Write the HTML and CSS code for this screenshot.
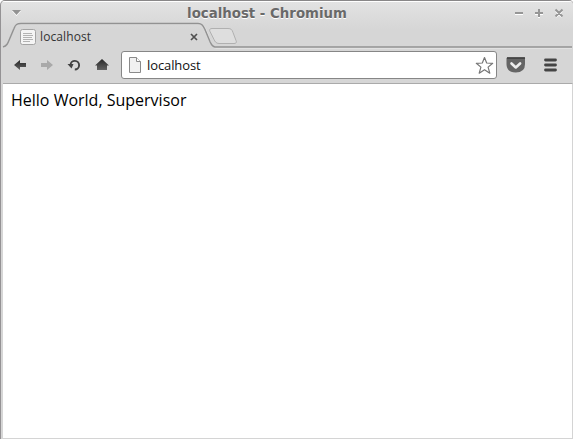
FILE: index.html
```
<!DOCTYPE html>
<html lang="en">
<head>
<meta charset="utf-8">
<title>localhost</title>
<link rel="stylesheet" href="styles.css">
</head>
<body>
<div class="window">
  <header class="titlebar">
    <svg class="menu-arrow" width="10" height="6" viewBox="0 0 10 6"><path d="M0 1h9L4.500 6z" fill="#fff"/><path d="M0 0h9L4.500 5z" fill="#929292"/></svg>
    <h1 class="title">localhost - Chromium</h1>
    <svg class="controls" width="54" height="12" viewBox="0 0 54 12" fill="none" stroke-width="2">
      <path d="M3 7h8M23 7h8M27 3v8M44 4l6 6M50 4l-6 6" stroke="#fff"/>
      <path d="M3 6h8M23 6h8M27 2v8M43.500 2.500l7 7M50.500 2.500l-7 7" stroke="#969696"/>
    </svg>
  </header>
  <div class="tabstrip">
    <svg class="tab-shape" width="573" height="28" viewBox="0 0 573 28" fill="none">
      <path d="M2 26.500c4-1 5-4 7-9l4-10c1.500-4 3-4.500 7-4.500h178c4 0 5 2 7 6l5 13c1 3 2 5 5 5h356" stroke="#ececec"/>
      <path d="M2 26c4-1 5-4 7-9l4-9.500c1.500-4 3-5 7-5h177c4 0 5 2 7 6l5 12c1.500 3 2 5.500 5 5.500h357" stroke="#929292" stroke-width="1.500"/>
      <path d="M211 7.500h16c3 0 4 1 5 4l3 8c1 2 0 3-2 3h-15c-3 0-4-2-5-4l-4-8c-1-2 0-3 2-3z" fill="#dedede" stroke="#b0b0b0"/>
    </svg>
    <div class="tab">
      <svg class="favicon" width="16" height="16" viewBox="0 0 16 16"><rect x=".5" y=".5" width="15" height="15" rx="2" fill="#f5f5f5" stroke="#a4a4a4"/><path d="M3 4.500h9M3 6.500h10M3 8.500h9M3 10.500h10M3 12.500h7" stroke="#b3b3b3"/></svg>
      <span class="tab-title">localhost</span>
      <svg class="tab-close" width="8" height="8" viewBox="0 0 8 8"><path d="M1 1l6 6M7 1L1 7" stroke="#505050" stroke-width="1.700"/></svg>
    </div>
  </div>
  <nav class="toolbar">
    <svg class="nav" width="110" height="18" viewBox="0 0 110 18">
      <defs><linearGradient id="dark" x1="0" y1="0" x2="0" y2="1"><stop offset="0" stop-color="#272727"/><stop offset="1" stop-color="#626262"/></linearGradient></defs>
      <path d="M11 9l6-5v3h6v4h-6v3z" fill="url(#dark)"/>
      <path d="M50 9l-6-5v3h-6v4h6v3z" fill="#a9a9a9"/>
      <path d="M67.500 9a4.300 4.300 0 1 1 4.300 4.500" fill="none" stroke="#414141" stroke-width="1.900"/>
      <path d="M64.500 8h6l-2 4.500z" fill="#414141"/>
      <path d="M92 9.500L99 3l7 6.500h-2V14H94V9.500z" fill="url(#dark)"/>
    </svg>
    <div class="omnibox">
      <svg width="12" height="16" viewBox="0 0 12 16"><path d="M.5.500h7l4 4v11H.5z" fill="#f1f1f1" stroke="#8a8a8a"/><path d="M7.500.500v4h4" fill="#fff" stroke="#8a8a8a"/></svg>
      <span class="url">localhost</span>
      <svg width="19" height="19" viewBox="0 0 19 19"><path d="M9.500 1.500l2.200 5.500 6 .3-4.600 3.800 1.700 6.100-5.300-3.500-5.300 3.500 1.700-6.100L1.300 7.300l6-.3z" fill="#fff" stroke="#777" stroke-width="1.200" stroke-linejoin="round"/></svg>
    </div>
    <svg class="pocket" width="20" height="18" viewBox="0 0 20 18"><path d="M.5 2.500q0-1 1-1h16.500q1 0 1 1v5.500q0 8.500-9.250 8.500T.5 8z" fill="#656565"/><path d="M1 2h18" stroke="#3c3c3c" stroke-width="1.500"/><path d="M5.500 7.500l4.300 4 4.300-4" fill="none" stroke="#ededed" stroke-width="2.600" stroke-linecap="round" stroke-linejoin="round"/></svg>
    <svg class="menu" width="13" height="14" viewBox="0 0 13 14"><path d="M1.500 2h10M1.500 7h10M1.500 12h10" stroke="#444" stroke-width="2.800" stroke-linecap="round"/></svg>
  </nav>
  <main class="page">Hello World, Supervisor</main>
</div>
</body>
</html>
```
FILE: styles.css
```
* { box-sizing: border-box; }
body { margin: 0; background: #fff; }
svg { display: block; flex: none; }
.window {
  display: flex;
  flex-direction: column;
  width: 573px;
  height: 439px;
  overflow: hidden;
  border-top: 1px solid #898788;
  border-left: 1px solid #949294;
  border-radius: 5px 4px 0 0;
  background: linear-gradient(#e3e3e3, #d6d6d6 28px);
  font-family: "Open Sans", "Noto Sans", sans-serif;
}
.titlebar {
  display: flex;
  height: 20px;
  align-items: center;
  padding: 3px 7px 0 11px;
  border-top: 1px solid #fff;
}
.title {
  flex: 1;
  margin: 2px 0 0;
  text-align: center;
  font: bold 13.330px/18px "DejaVu Sans", sans-serif;
  color: #696969;
  text-shadow: 0 1px #fff;
}
.tabstrip { position: relative; height: 27px; }
.tab-shape { position: absolute; left: 0; top: 0; }
.tab {
  position: relative;
  display: flex;
  width: 204px;
  height: 27px;
  align-items: center;
  padding: 5px 7px 0 19px;
}
.tab-title {
  flex: 1;
  margin-left: 4px;
  font-size: 12px;
  line-height: 16px;
  letter-spacing: 0.1px;
  color: #333;
}
.toolbar {
  display: flex;
  height: 35px;
  align-items: center;
  padding: 0 16px 1px 2px;
}
.omnibox {
  display: flex;
  width: 376px;
  height: 28px;
  align-items: center;
  margin-left: 8px;
  padding: 0 2px 0 7px;
  border: 1px solid #868686;
  border-radius: 3px;
  background: #fff;
}
.url { flex: 1; margin-left: 6px; font-size: 13px; line-height: 20px; letter-spacing: -0.1px; color: #111; }
.pocket { margin-left: 9px; }
.menu { margin-left: auto; }
.page {
  flex: 1;
  margin-left: 2px;
  padding: 4px 8px;
  border: solid #d4d4d4;
  border-width: 0 1px 1px 0;
  border-top: 1px solid #aaa;
  background: #fff;
  font-size: 16px;
  line-height: 24px;
  color: #000;
}
```
